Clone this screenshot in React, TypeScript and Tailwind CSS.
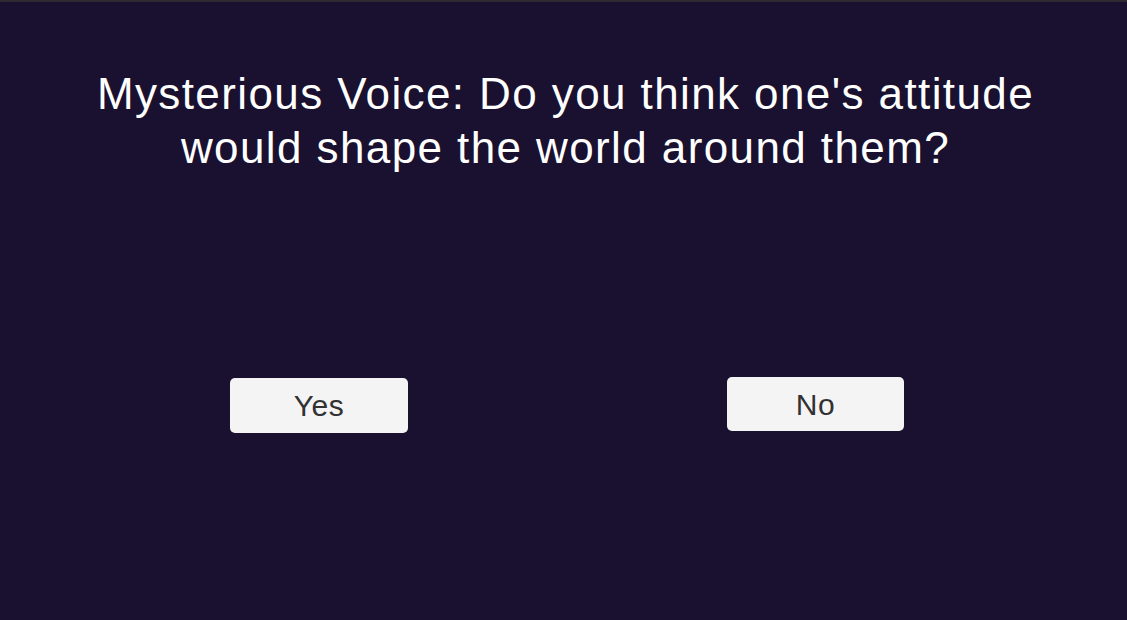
export default function App() {
  return (
    <div className="w-[1127px] h-[620px] bg-[#1a1130] flex flex-col overflow-hidden" style={{ fontFamily: '"Liberation Sans", Arial, sans-serif' }}>
      <div className="h-[2px] bg-[#2e2b30] shrink-0" />
      <h1 className="mt-[65px] pl-[4px] text-center text-white text-[44px] leading-[54px] tracking-[1.4px] font-normal">
        Mysterious Voice: Do you think one's attitude
        <br />
        would shape the world around them?
      </h1>
      <div className="mt-[203px] flex items-start pl-[230px]">
        <button className="w-[178px] h-[55px] bg-[#f4f4f4] rounded-[5px] text-[#323232] text-[30px] tracking-[0.5px] flex items-center justify-center">
          Yes
        </button>
        <button className="ml-[319px] -mt-[1px] w-[177px] h-[54px] bg-[#f4f4f4] rounded-[5px] text-[#323232] text-[30px] tracking-[0.5px] flex items-center justify-center">
          No
        </button>
      </div>
    </div>
  );
}
